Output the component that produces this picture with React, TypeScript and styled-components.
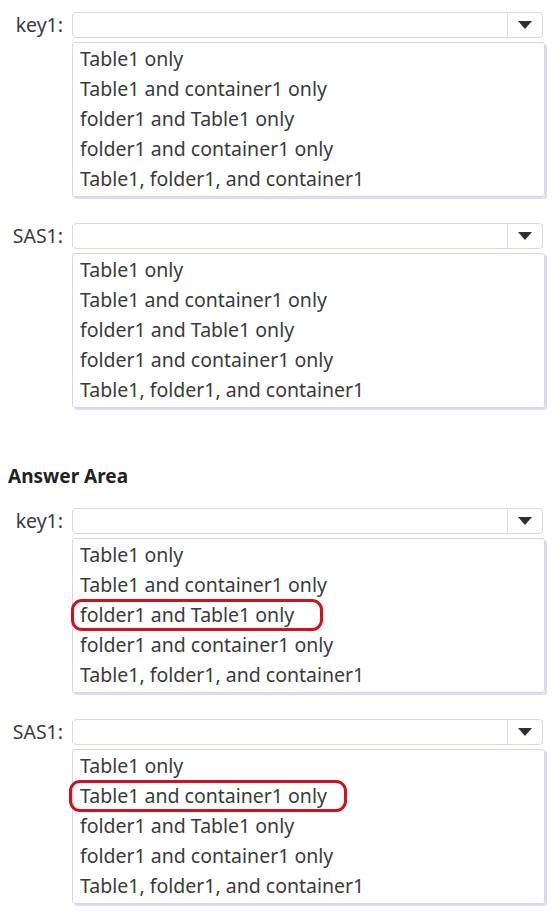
import React from "react";
import styled, { createGlobalStyle } from "styled-components";

const options = [
  "Table1 only",
  "Table1 and container1 only",
  "folder1 and Table1 only",
  "folder1 and container1 only",
  "Table1, folder1, and container1",
];

type Mark = { index: number; left: number; width: number };

const blocks: { label: string; mark?: Mark }[][] = [
  [{ label: "key1:" }, { label: "SAS1:" }],
  [
    { label: "key1:", mark: { index: 2, left: -2, width: 252 } },
    { label: "SAS1:", mark: { index: 1, left: -4, width: 278 } },
  ],
];

const GlobalStyle = createGlobalStyle`
  body {
    margin: 0;
    background: #ffffff;
    font-family: "Noto Sans", "Open Sans", sans-serif;
    color: #3a3a3a;
  }
`;

const Page = styled.div`
  padding: 12px 13px 0 8px;
  display: flex;
  flex-direction: column;
`;

const Group = styled.div<{ $gap: number }>`
  display: flex;
  flex-direction: column;
  margin-bottom: ${(p) => p.$gap}px;
`;

const Block = styled.div`
  display: flex;
  flex-direction: column;
  margin-bottom: 26px;
`;

const Row = styled.div`
  display: flex;
  align-items: center;
`;

const Label = styled.div`
  width: 55px;
  margin-right: 9px;
  text-align: right;
  font-size: 19.5px;
  line-height: 26px;
  white-space: nowrap;
`;

const Select = styled.div`
  flex: 1;
  height: 26px;
  margin-right: 2px;
  box-sizing: border-box;
  border: 1px solid #d9d9e4;
  border-radius: 4px;
  display: flex;
  justify-content: flex-end;
`;

const Arrow = styled.div`
  width: 34px;
  border-left: 1px solid #dedee6;
  display: flex;
  align-items: center;
  justify-content: center;
`;

const List = styled.ul`
  list-style: none;
  margin: 4px 0 0 64px;
  padding: 1px 0 2px 0;
  box-sizing: border-box;
  border: 1px solid #d6d6e8;
  border-radius: 3px;
  box-shadow: 2px 2px 0 #dcdcf6;
`;

const Item = styled.li`
  position: relative;
  padding-left: 7px;
  font-size: 19.5px;
  line-height: 30px;
  white-space: nowrap;
`;

const Ring = styled.span`
  position: absolute;
  top: -1px;
  height: 32px;
  box-sizing: border-box;
  border: 3px solid #d0101c;
  border-radius: 11px;
`;

const Heading = styled.div`
  font-weight: 700;
  font-size: 19px;
  line-height: 24px;
  color: #222;
  margin: 0 0 20px 0;
`;

const Caret = () => (
  <svg width="14" height="8" viewBox="0 0 14 8">
    <path d="M0 0 H14 L7 8 Z" fill="#2f2f2f" />
  </svg>
);

const Dropdown = ({ label, mark }: { label: string; mark?: Mark }) => (
  <Block>
    <Row>
      <Label>{label}</Label>
      <Select>
        <Arrow>
          <Caret />
        </Arrow>
      </Select>
    </Row>
    <List>
      {options.map((o, i) => (
        <Item key={o}>
          {mark && mark.index === i && (
            <Ring style={{ left: mark.left, width: mark.width }} />
          )}
          {o}
        </Item>
      ))}
    </List>
  </Block>
);

export default function App() {
  return (
    <>
      <GlobalStyle />
      <Page>
        <Group $gap={30}>
          {blocks[0].map((b, i) => (
            <Dropdown key={i} {...b} />
          ))}
        </Group>
        <Heading>Answer Area</Heading>
        <Group $gap={0}>
          {blocks[1].map((b, i) => (
            <Dropdown key={i} {...b} />
          ))}
        </Group>
      </Page>
    </>
  );
}
